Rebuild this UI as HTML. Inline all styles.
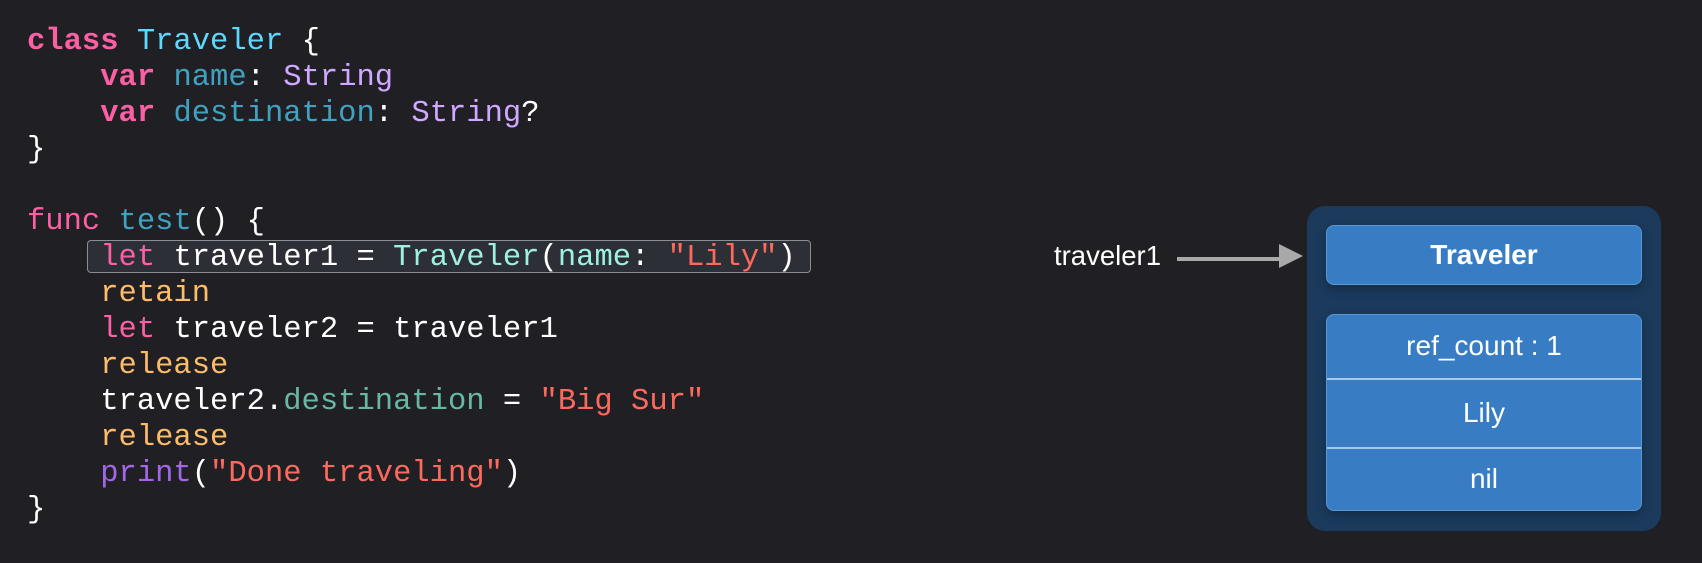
<!DOCTYPE html>
<html><head><meta charset="utf-8"><style>
html,body{margin:0;padding:0;background:#1f1f24;width:1702px;height:563px;overflow:hidden;position:relative}
.code{position:absolute;left:27px;top:24px;font-family:"Liberation Mono",monospace;font-size:30.5px;line-height:36px;color:#fff;white-space:pre}
.k{color:#fc5fa3;font-weight:bold}.kf{color:#fc5fa3}.t{color:#5dd8ff}.p{color:#41a1c0}.s{color:#d0a8ff}
.o{color:#fdbc6a}.c{color:#9ef1dd}.r{color:#fc6a5d}.g{color:#67b7a4}.pr{color:#a167e6}
.hl{position:absolute;left:87px;top:240px;width:722px;height:31px;border:1.5px solid #8a8d94;border-radius:4px;background:#2c2f36}
.lab{position:absolute;left:1054px;top:240px;font-family:"Liberation Sans",sans-serif;font-size:27.5px;color:#fff}
.line{position:absolute;left:1177px;top:257px;width:104px;height:4px;background:#a9a9a9}
.head{position:absolute;left:1279px;top:244px;width:0;height:0;border-top:12px solid transparent;border-bottom:12px solid transparent;border-left:24px solid #a9a9a9}
.outer{position:absolute;left:1307px;top:206px;width:354px;height:325px;background:#1b3a5c;border-radius:18px}
.bx{position:absolute;left:1326px;width:314px;background:#387dc3;border:1.5px solid #5b97d3;border-radius:8px;box-shadow:0 4px 10px rgba(0,0,0,.25);font-family:"Liberation Sans",sans-serif;color:#fff;text-align:center;font-size:28px}
.row{border-bottom:2px solid #a9c7e6;box-sizing:border-box}
</style></head><body>
<div class="hl"></div>
<div class="code"><span class="k">class</span> <span class="t">Traveler</span> {
    <span class="k">var</span> <span class="p">name</span>: <span class="s">String</span>
    <span class="k">var</span> <span class="p">destination</span>: <span class="s">String</span>?
}

<span class="kf">func</span> <span class="p">test</span>() {
    <span class="kf">let</span> traveler1 = <span class="c">Traveler</span>(<span class="c">name</span>: <span class="r">"Lily"</span>)
    <span class="o">retain</span>
    <span class="kf">let</span> traveler2 = traveler1
    <span class="o">release</span>
    traveler2.<span class="g">destination</span> = <span class="r">"Big Sur"</span>
    <span class="o">release</span>
    <span class="pr">print</span>(<span class="r">"Done traveling"</span>)
}</div>
<div class="lab">traveler1</div>
<div class="line"></div><div class="head"></div>
<div class="outer"></div>
<div class="bx" style="top:225px;height:58px;line-height:58px;font-weight:bold">Traveler</div>
<div class="bx" style="top:314px;height:195px">
<div class="row" style="height:65px;line-height:62px">ref_count : 1</div>
<div class="row" style="height:69px;line-height:66px">Lily</div>
<div style="height:60px;line-height:60px">nil</div>
</div>
</body></html>
